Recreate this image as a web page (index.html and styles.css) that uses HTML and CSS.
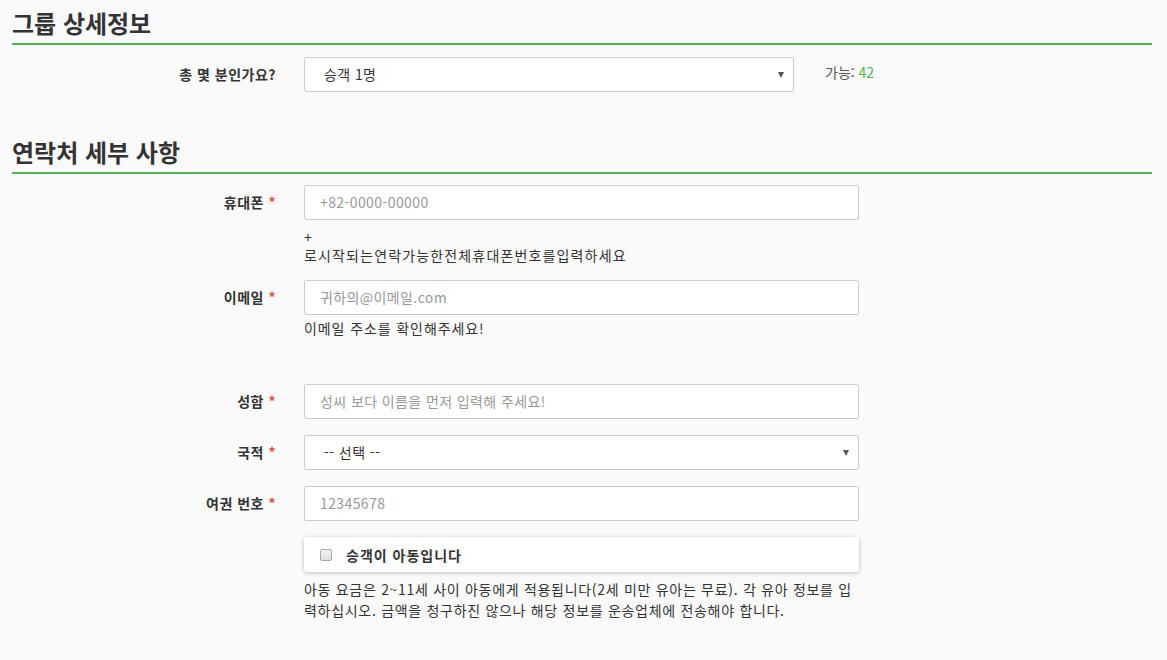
FILE: index.html
```html
<!DOCTYPE html>
<html lang="ko">
<head>
    <meta charset="UTF-8">
    <meta name="viewport" content="width=device-width, initial-scale=1.0">
    <title>그룹 상세정보</title>
    <link rel="stylesheet" href="styles.css">
</head>
<body>
    <div class="page">
        <h2 class="section-title">그룹 상세정보</h2>

        <div class="form-row">
            <label class="form-label">총 몇 분인가요?</label>
            <div class="select-box select-short">
                <span>승객 1명</span>
                <span class="caret"></span>
            </div>
            <div class="available">가능: <span class="count">42</span></div>
        </div>

        <h2 class="section-title second">연락처 세부 사항</h2>

        <div class="form-row top">
            <label class="form-label">휴대폰 <span class="req">*</span></label>
            <div class="field">
                <div class="input">+82-0000-00000</div>
                <p class="help">+<br>로시작되는연락가능한전체휴대폰번호를입력하세요</p>
            </div>
        </div>

        <div class="form-row top">
            <label class="form-label">이메일 <span class="req">*</span></label>
            <div class="field">
                <div class="input">귀하의@이메일.com</div>
                <p class="help tight">이메일 주소를 확인해주세요!</p>
            </div>
        </div>

        <div class="form-row spaced">
            <label class="form-label">성함 <span class="req">*</span></label>
            <div class="input">성씨 보다 이름을 먼저 입력해 주세요!</div>
        </div>

        <div class="form-row">
            <label class="form-label">국적 <span class="req">*</span></label>
            <div class="select-box">
                <span>-- 선택 --</span>
                <span class="caret"></span>
            </div>
        </div>

        <div class="form-row">
            <label class="form-label">여권 번호 <span class="req">*</span></label>
            <div class="input">12345678</div>
        </div>

        <div class="form-row top">
            <span class="form-label"></span>
            <div class="field">
                <div class="check-card">
                    <span class="checkbox"></span>
                    <span>승객이 아동입니다</span>
                </div>
                <p class="note">아동 요금은 2~11세 사이 아동에게 적용됩니다(2세 미만 유아는 무료). 각 유아 정보를 입력하십시오. 금액을 청구하진 않으나 해당 정보를 운송업체에 전송해야 합니다.</p>
            </div>
        </div>
    </div>
</body>
</html>
```

FILE: styles.css
```css
body {
    margin: 0;
    background-color: #fafafa;
    font-family: "Noto Sans CJK KR", "Noto Sans", Arial, sans-serif;
    font-size: 14px;
    color: #333;
}

.page {
    width: 1140px;
    padding: 0 0 0 12px;
}

.section-title {
    margin: 0;
    padding-top: 7px;
    height: 36px;
    font-size: 24px;
    line-height: 32px;
    font-weight: bold;
    color: #333;
    border-bottom: 2px solid #4cb848;
    margin-bottom: 12px;
}

.section-title.second {
    padding-top: 6px;
    margin-top: 38px;
    margin-bottom: 11px;
}

.form-row {
    display: flex;
    align-items: center;
    margin-bottom: 16px;
}

.form-row.top {
    align-items: flex-start;
}

.form-row.spaced {
    margin-top: 47px;
}

.form-label {
    width: 264px;
    flex-shrink: 0;
    margin-right: 28px;
    text-align: right;
    font-size: 14px;
    font-weight: bold;
    line-height: 35px;
    letter-spacing: 0.5px;
}

.req {
    color: #e74c3c;
}

.field {
    width: 555px;
}

.input,
.select-box {
    box-sizing: border-box;
    width: 555px;
    height: 35px;
    padding: 0 15px;
    background: #fff;
    border: 1px solid #ccc;
    border-radius: 2px;
    line-height: 33px;
    color: #999;
    letter-spacing: 0.4px;
}

.select-box {
    display: flex;
    justify-content: space-between;
    align-items: center;
    color: #333;
    padding: 0 9px 0 19px;
}

.select-short {
    width: 490px;
}

.caret {
    width: 0;
    height: 0;
    border-left: 3.5px solid transparent;
    border-right: 3.5px solid transparent;
    border-top: 6px solid #555;
}

.available {
    margin-left: 31px;
    margin-top: -6px;
    color: #555;
}

.count {
    color: #4cb848;
}

.help {
    margin: 8px 0 0;
    font-size: 14px;
    line-height: 18px;
    letter-spacing: 1.15px;
}

.help.tight {
    margin-top: 4px;
    letter-spacing: 0.9px;
}

.check-card {
    display: flex;
    align-items: center;
    height: 35px;
    padding: 0 16px;
    background: #fff;
    border-radius: 3px;
    box-shadow: 0 1px 4px rgba(0, 0, 0, 0.25);
    font-size: 14px;
    font-weight: bold;
    letter-spacing: 1px;
}

.checkbox {
    width: 10px;
    height: 10px;
    margin-right: 14px;
    border: 1px solid #aaa;
    border-radius: 2px;
    background: linear-gradient(#f4f4f4, #ddd);
}

.note {
    margin: 7px 0 0;
    font-size: 14px;
    line-height: 21px;
    color: #333;
    letter-spacing: 0.7px;
}
```
